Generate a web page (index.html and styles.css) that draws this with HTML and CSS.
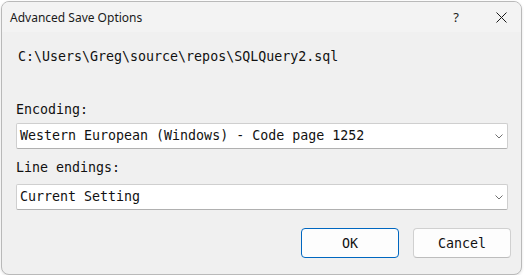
FILE: index.html
```html
<!DOCTYPE html>
<html lang="en">
<head>
  <meta charset="UTF-8">
  <title>Advanced Save Options</title>
  <link rel="stylesheet" href="styles.css">
</head>
<body>
  <div class="window">
    <div class="titlebar">
      <span class="title">Advanced Save Options</span>
      <span class="title-btn help">?</span>
      <span class="title-btn close">
        <svg width="11" height="11" viewBox="0 0 11 11">
          <path d="M0.5 0.5 L10.5 10.5 M10.5 0.5 L0.5 10.5" stroke="#1a1a1a" stroke-width="1" fill="none"/>
        </svg>
      </span>
    </div>

    <div class="content">
      <div class="path">C:\Users\Greg\source\repos\SQLQuery2.sql</div>

      <label class="field-label first">Encoding:</label>
      <div class="combo">
        <span>Western European (Windows) - Code page 1252</span>
        <svg class="chevron" width="8" height="5" viewBox="0 0 8 5">
          <path d="M0.5 0.5 L4 4 L7.5 0.5" stroke="#707070" stroke-width="1" fill="none"/>
        </svg>
      </div>

      <label class="field-label second">Line endings:</label>
      <div class="combo second">
        <span>Current Setting</span>
        <svg class="chevron" width="8" height="5" viewBox="0 0 8 5">
          <path d="M0.5 0.5 L4 4 L7.5 0.5" stroke="#707070" stroke-width="1" fill="none"/>
        </svg>
      </div>

      <div class="buttons">
        <button class="btn default">OK</button>
        <button class="btn">Cancel</button>
      </div>
    </div>
  </div>
</body>
</html>
```

FILE: styles.css
```css
body {
  margin: 0;
  background: #fff;
  width: 524px;
  height: 275px;
  overflow: hidden;
}

.window {
  box-sizing: border-box;
  width: 521px;
  height: 274px;
  margin: 1px 0 0 1px;
  border: 1px solid #b9b9b9;
  border-radius: 8px;
  background: #f0f0f0;
  overflow: hidden;
  box-shadow: 0 1px 3px rgba(0, 0, 0, 0.12);
}

.titlebar {
  display: flex;
  align-items: center;
  height: 30px;
  background: #f3f3f3;
  padding-left: 8px;
}

.title {
  flex: 1;
  font-family: "Noto Sans", "Open Sans", sans-serif;
  font-size: 12px;
  color: #1a1a1a;
}

.title-btn {
  display: flex;
  align-items: center;
  justify-content: center;
  height: 30px;
}

.help {
  width: 50px;
  font-family: "Noto Sans", sans-serif;
  font-size: 13px;
  color: #1a1a1a;
}

.close {
  width: 40px;
}

.content {
  padding: 17px 10px 0 14px;
  font-family: "DejaVu Sans Mono", "Liberation Mono", monospace;
  font-size: 13.3px;
  line-height: 16px;
  color: #111;
}

.path {
  padding-left: 2px;
  height: 16px;
}

.field-label {
  display: block;
  height: 16px;
}

.field-label.first {
  margin-top: 37px;
}

.field-label.second {
  margin-top: 11px;
}

.combo {
  box-sizing: border-box;
  display: flex;
  align-items: center;
  justify-content: space-between;
  width: 492px;
  height: 26px;
  margin-top: 5px;
  padding: 0 4px 0 3px;
  background: #fff;
  border: 1px solid #cfcfcf;
  border-bottom-color: #b0b0b0;
  border-radius: 2px;
}

.combo.second {
  margin-top: 8px;
}

.buttons {
  display: flex;
  justify-content: flex-end;
  gap: 14px;
  margin-top: 18px;
}

.btn {
  box-sizing: border-box;
  width: 98px;
  height: 30px;
  font-family: "DejaVu Sans Mono", "Liberation Mono", monospace;
  font-size: 13.3px;
  color: #111;
  background: #fdfdfd;
  border: 1px solid #d0d0d0;
  border-bottom-color: #bdbdbd;
  border-radius: 4px;
}

.btn.default {
  border: 1px solid #0067c0;
}
```
